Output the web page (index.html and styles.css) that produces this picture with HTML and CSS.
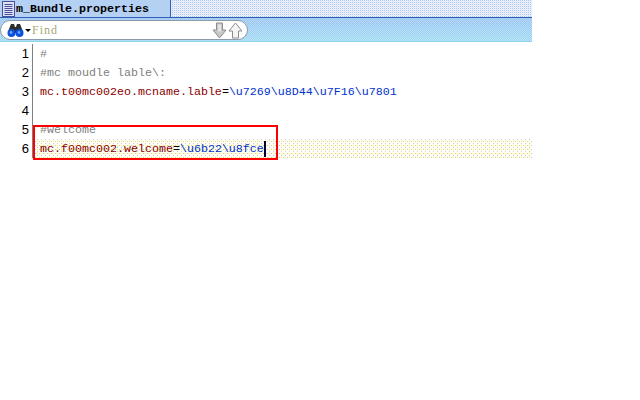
FILE: index.html
```html
<!DOCTYPE html>
<html lang="en">
<head>
<meta charset="utf-8">
<title>m_Bundle.properties</title>
<link rel="stylesheet" href="styles.css">
</head>
<body>
<div class="window">
  <div class="tabbar">
    <div class="tab">
      <svg class="file-icon" width="15" height="16" viewBox="0 0 15 16"><rect x="1.5" y="0.5" width="12" height="15" fill="#dfe0f4" stroke="#4a4f9a"/><path d="M3.500 3.500h8M3.500 5.500h8M3.500 7.500h8M3.500 9.500h8M3.500 11.500h8M3.500 13.500h8" stroke="#4a4f9a"/></svg>
      <span class="tab-name">m_Bundle.properties</span>
    </div>
  </div>
  <div class="toolbar">
    <div class="search">
      <svg class="binoculars" width="17" height="15" viewBox="0 0 17 15"><path d="M2 6 4 1h3l1 3h1l1-3h3l2 5 1 4H1z" fill="#2e2e2e"/><circle cx="4.500" cy="10" r="4" fill="#0a50d8"/><circle cx="12.500" cy="10" r="4" fill="#0a50d8"/><circle cx="4" cy="9.500" r="1.400" fill="#6ea4ff"/><circle cx="12" cy="9.500" r="1.400" fill="#6ea4ff"/></svg>
      <span class="caret-down"></span>
      <span class="find-label">Find</span>
      <svg class="arrow" width="15" height="17" viewBox="0 0 15 17"><path d="M4.500 1h6v7h3.500L7.500 16 1 8h3.500z" fill="#c8c8c8" stroke="#8c8c8c"/><path d="M6 2.500h3v7H6z" fill="#e4e4e4"/></svg>
      <svg class="arrow" width="15" height="17" viewBox="0 0 15 17"><path d="M4.500 16h6V9h3.500L7.500 1 1 9h3.500z" fill="#f6f6f6" stroke="#8c8c8c"/></svg>
    </div>
  </div>
  <div class="editor">
    <div class="line"><span class="num">1</span><span class="code comment">#</span></div>
    <div class="line"><span class="num">2</span><span class="code comment">#mc moudle lable\:</span></div>
    <div class="line"><span class="num">3</span><span class="code"><span class="key">mc.t00mc002eo.mcname.lable</span>=<span class="val">\u7269\u8D44\u7F16\u7801</span></span></div>
    <div class="line"><span class="num">4</span><span class="code"></span></div>
    <div class="line"><span class="num">5</span><span class="code comment">#welcome</span></div>
    <div class="line current"><span class="num">6</span><span class="code"><span class="key">mc.f00mc002.welcome</span>=<span class="val">\u6b22\u8fce</span><span class="cursor"></span></span></div>
    <div class="redbox"></div>
  </div>
</div>
</body>
</html>
```
FILE: styles.css
```css
html, body { margin: 0; padding: 0; background: #fff; }
body { width: 640px; height: 400px; overflow: hidden; font-family: "Liberation Mono", monospace; }
.window { width: 532px; }
.tabbar {
  height: 17px;
  border-bottom: 1px solid #2d5fb4;
  background:
    conic-gradient(at 1px 1px, transparent 75%, #a8c8f4 0) 0 0 / 2px 2px,
    conic-gradient(at 1px 1px, transparent 75%, #f0e8f8 0) 1px 1px / 2px 2px,
    #e8f2fc;
}
.tab {
  width: 171px;
  height: 17px;
  box-sizing: border-box;
  border-right: 1px solid #2d5fb4;
  background: #b4d0f2;
  display: flex;
  align-items: center;
  gap: 0;
  padding-left: 1px;
}
.tab-name { font-size: 11.67px; font-weight: bold; color: #000; }
.file-icon { flex: none; }
.toolbar {
  height: 24px;
  box-sizing: border-box;
  padding-top: 2px;
  border-bottom: 1px solid #8fd0ea;
  background:
    linear-gradient(rgba(160, 200, 245, 0.55), rgba(170, 232, 245, 0.55)),
    repeating-conic-gradient(#8cc0f0 0 25%, #d4e8f8 0 50%) 0 0 / 2px 2px;
}
.search {
  width: 248px;
  height: 20px;
  box-sizing: border-box;
  border: 1px solid #8a9aa8;
  border-radius: 10px;
  background: #fff;
  display: flex;
  align-items: center;
  padding-left: 6px;
  padding-right: 4px;
}
.binoculars { flex: none; }
.caret-down {
  width: 0;
  height: 0;
  margin-left: 1px;
  border: 3px solid transparent;
  border-top: 3px solid #000;
  border-bottom: 0;
}
.find-label {
  flex: 1;
  margin-left: 1px;
  font-family: "Liberation Serif", serif;
  font-size: 12px;
  letter-spacing: 1px;
  color: #a8a878;
}
.arrow { flex: none; margin-left: 1px; }
.editor {
  position: relative;
  padding-top: 2px;
}
.line {
  display: flex;
  height: 19px;
  align-items: center;
  font-size: 11.67px;
}
.num {
  flex: none;
  width: 33px;
  box-sizing: border-box;
  padding-right: 3px;
  text-align: right;
  font-family: "Liberation Sans", sans-serif;
  font-size: 13px;
  color: #000;
  border-right: 1px solid #808080;
  height: 19px;
  line-height: 19px;
}
.code {
  flex: 1;
  height: 19px;
  line-height: 20px;
  padding-left: 7px;
  white-space: pre;
  color: #000;
  display: flex;
}
.comment { color: #808080; }
.key { color: #8b0000; }
.val { color: #0033cc; }
.current .code {
  background:
    conic-gradient(at 1px 1px, transparent 75%, #cfc9d2 0) 0 0 / 4px 4px,
    conic-gradient(at 1px 1px, transparent 75%, #cfc9d2 0) 2px 2px / 4px 4px,
    repeating-linear-gradient(90deg, #fdfbc0 0 1px, transparent 1px 4px),
    repeating-linear-gradient(0deg, #fdfbc0 0 1px, #fff 1px 4px);
}
.cursor {
  width: 2px;
  height: 16px;
  margin-top: 2px;
  background: #000033;
}
.redbox {
  position: absolute;
  left: 33px;
  top: 83px;
  width: 241px;
  height: 31px;
  border: 2px solid #f00;
}
```
